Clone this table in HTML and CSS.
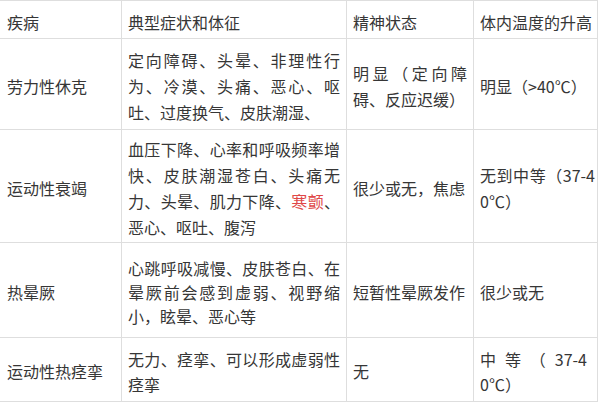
FILE: index.html
```html
<!DOCTYPE html>
<html lang="zh-CN">
<head>
<meta charset="utf-8">
<title>热相关疾病</title>
<link rel="stylesheet" href="styles.css">
</head>
<body>
<table class="tbl">
  <colgroup>
    <col class="c1"><col class="c2"><col class="c3"><col class="c4">
  </colgroup>
  <tr class="rh">
    <td>疾病</td>
    <td>典型症状和体征</td>
    <td>精神状态</td>
    <td class="temp">体内温度的升高</td>
  </tr>
  <tr class="r1">
    <td>劳力性休克</td>
    <td>定向障碍、头晕、非理性行为、冷漠、头痛、恶心、呕吐、过度换气、皮肤潮湿、</td>
    <td>明显（定向障碍、反应迟缓）</td>
    <td class="temp">明显（&gt;40℃）</td>
  </tr>
  <tr class="r2">
    <td>运动性衰竭</td>
    <td>血压下降、心率和呼吸频率增快、皮肤潮湿苍白、头痛无力、头晕、肌力下降、<span class="red">寒颤</span>、恶心、呕吐、腹泻</td>
    <td>很少或无，焦虑</td>
    <td class="temp">无到中等（37-40℃）</td>
  </tr>
  <tr class="r3">
    <td>热晕厥</td>
    <td>心跳呼吸减慢、皮肤苍白、在晕厥前会感到虚弱、视野缩小，眩晕、恶心等</td>
    <td>短暂性晕厥发作</td>
    <td class="temp">很少或无</td>
  </tr>
  <tr class="r4">
    <td>运动性热痉挛</td>
    <td>无力、痉挛、可以形成虚弱性痉挛</td>
    <td>无</td>
    <td class="temp narrow">中等（37-40℃）</td>
  </tr>
</table>
</body>
</html>
```

FILE: styles.css
```css
html, body {
  margin: 0;
  padding: 0;
  background: #ffffff;
}

.tbl {
  table-layout: fixed;
  border-collapse: separate;
  border-spacing: 0;
  width: 598px;
  border-top: 1px solid #dedede;
  font-family: "Noto Sans CJK SC", "Noto Sans", sans-serif;
  font-size: 16px;
  line-height: 26px;
  color: #363636;
}

.c1 { width: 122px; }
.c2 { width: 225px; }
.c3 { width: 127px; }
.c4 { width: 124px; }

.tbl td {
  box-sizing: border-box;
  padding: 6px 6px 2px 6px;
  border-right: 1px solid #dedede;
  border-bottom: 1px solid #dedede;
  vertical-align: middle;
  text-align: justify;
}

.tbl td:first-child {
  padding-left: 7px;
}

.tbl td.temp {
  padding-right: 2px;
  word-break: break-all;
}

.tbl td.temp.narrow {
  padding-right: 10px;
}

.rh td { height: 38px; }
.r1 td { height: 91px; }
.r2 td { height: 113px; }
.r3 td { height: 95px; line-height: 24px; }
.r4 td { height: 64px; line-height: 25px; }

.red {
  color: #e04848;
}
```
